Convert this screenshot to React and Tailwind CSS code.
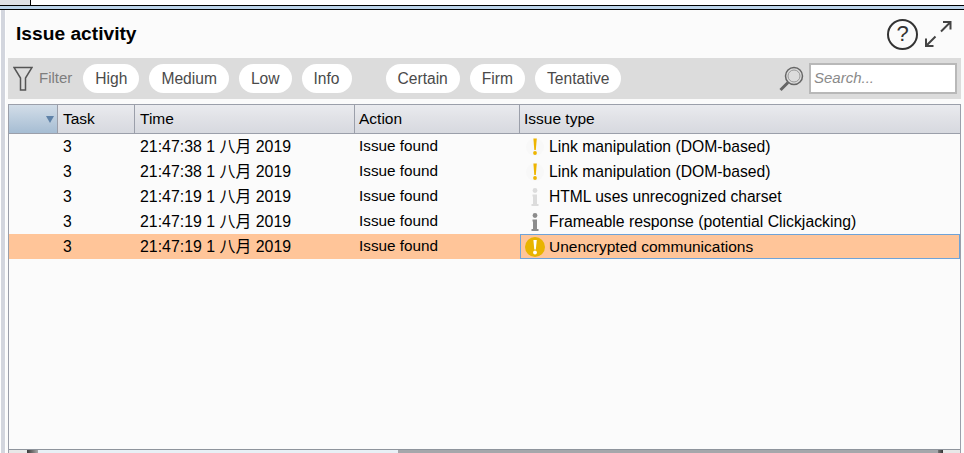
const SEVERITY = ['High', 'Medium', 'Low', 'Info'];
const CONFIDENCE = ['Certain', 'Firm', 'Tentative'];

const ROWS = [
  { time: '21:47:38 1 八月 2019', issue: 'Link manipulation (DOM-based)', icon: 'bang', size: 'text-[15.700px]' },
  { time: '21:47:38 1 八月 2019', issue: 'Link manipulation (DOM-based)', icon: 'bang', size: 'text-[15.700px]' },
  { time: '21:47:19 1 八月 2019', issue: 'HTML uses unrecognized charset', icon: 'infoLight', size: 'text-[15.600px]' },
  { time: '21:47:19 1 八月 2019', issue: 'Frameable response (potential Clickjacking)', icon: 'info', size: 'text-[15.800px]' },
  { time: '21:47:19 1 八月 2019', issue: 'Unencrypted communications', icon: 'circle', size: 'text-[15.500px]', selected: true },
];

function IssueIcon({ type }) {
  if (type === 'bang') {
    return (
      <svg width="20" height="20" viewBox="0 0 20 20">
        <circle cx="10" cy="10" r="9" fill="#f8f8f8" />
        <path d="M8.400 1.500h3.400l-1 11.500h-1.500z" fill="#eeb500" />
        <circle cx="10" cy="16" r="1.900" fill="#eeb500" />
      </svg>
    );
  }
  if (type === 'circle') {
    return (
      <svg width="20" height="20" viewBox="0 0 20 20">
        <circle cx="10" cy="10" r="10" fill="#e8b400" />
        <path d="M8.400 3h3.400l-1 9.500h-1.500z" fill="#fff" />
        <circle cx="10" cy="15.500" r="1.900" fill="#fff" />
      </svg>
    );
  }
  const fill = type === 'info' ? '#8c8c8c' : '#dcdcdc';
  return (
    <svg width="20" height="20" viewBox="0 0 20 20">
      <circle cx="10" cy="3.500" r="2.400" fill={fill} />
      <path d="M7.500 7.500h4.500v9.500h1.500v2h-7v-2h1.500v-7.500h-.5z" fill={fill} />
    </svg>
  );
}

function Pill({ label }) {
  return (
    <span className="flex h-[29px] items-center rounded-full bg-white px-3 text-[15.600px] text-[#4a4a4a]">
      {label}
    </span>
  );
}

function HeadCell({ className, children }) {
  return (
    <div className={`flex h-full items-center border-r border-[#9b9faa] ${className}`}>
      {children}
    </div>
  );
}

export default function App() {
  return (
    <div
      className="flex h-[453px] w-[964px] flex-col overflow-hidden bg-white text-black"
      style={{ fontFamily: '"Liberation Sans", "Noto Sans CJK SC", sans-serif' }}
    >
      {/* window strip on top */}
      <div className="flex h-[5px] shrink-0">
        <div className="w-[30px] bg-[#dfe1e6]" />
        <div className="flex-1 border-l border-black bg-white" />
      </div>
      <div className="h-[5px] shrink-0 border-y border-black bg-[#bcd4ea]" />

      <div className="flex min-h-0 flex-1">
        <div className="ml-[1px] w-[4px] shrink-0 bg-[#d3d6de]" />
        <div className="ml-[1px] flex min-w-0 flex-1 flex-col bg-[#fbfbfb]">
          {/* title */}
          <div className="flex h-[48px] shrink-0 items-center justify-between pl-[10px] pr-[12px]">
            <h1 className="text-[19.200px] font-bold">Issue activity</h1>
            <div className="flex items-center gap-[6px]">
              <span className="flex h-[31px] w-[31px] items-center justify-center rounded-full border-2 border-[#333] text-[22px] leading-none text-[#333]">
                ?
              </span>
              <svg width="28" height="28" viewBox="0 0 28 28" fill="none" stroke="#444" strokeWidth="2">
                <path d="M19 2h7.500v7.500M26.500 2L17 11.500" />
                <path d="M2 18.500V26h7.500M2 26l9.500-9.500" />
              </svg>
            </div>
          </div>

          {/* filter bar */}
          <div className="ml-[2px] mr-[3px] flex h-[41px] shrink-0 items-center bg-[#dcdcdc] pl-[5px]">
            <svg width="20" height="25" viewBox="0 0 20 25" fill="none" stroke="#555" strokeWidth="1.500">
              <path d="M1 1.500h18l-6.500 10.500v12h-5V12z" />
            </svg>
            <span className="ml-[6px] mr-[11px] text-[15px] text-[#7e7e7e]">Filter</span>
            <div className="flex gap-[10px]">
              {SEVERITY.map((s) => <Pill key={s} label={s} />)}
            </div>
            <div className="ml-[34px] flex gap-[10px]">
              {CONFIDENCE.map((s) => <Pill key={s} label={s} />)}
            </div>
            <div className="flex-1" />
            <svg width="26" height="26" viewBox="0 0 26 26" fill="none" stroke="#666" className="mr-[5px]">
              <circle cx="16" cy="10" r="8.500" strokeWidth="1.500" />
              <circle cx="16" cy="10" r="6" strokeWidth="1" stroke="#999" />
              <path d="M10 16.500L2.500 24" strokeWidth="3" />
            </svg>
            <div className="mr-[4px] flex h-[31px] w-[148px] items-center border-2 border-[#b8b8b8] bg-white pl-[3px] text-[15px] italic text-[#8a8a8a]">
              Search...
            </div>
          </div>

          {/* table */}
          <div className="ml-[2px] mr-[3px] mt-[5px] flex min-h-0 flex-1 flex-col border-x border-[#9b9faa]">
            <div className="flex h-[30px] shrink-0 border-y border-[#9b9faa] bg-gradient-to-b from-[#eaebef] via-[#e0e1e6] to-[#d7d9df] text-[15.500px]">
              <div className="flex h-full w-[49px] items-center justify-end border-r border-[#9b9faa] bg-gradient-to-b from-[#d2dde8] to-[#a6bdd3] pr-[3px]">
                <span className="h-0 w-0 border-x-[4px] border-t-[7px] border-x-transparent border-t-[#5f82a8]" />
              </div>
              <HeadCell className="w-[77px] pl-[5px]">Task</HeadCell>
              <HeadCell className="w-[220px] pl-[5px]">Time</HeadCell>
              <HeadCell className="w-[165px] pl-[4px]">Action</HeadCell>
              <div className="flex h-full flex-1 items-center pl-[4px]">Issue type</div>
            </div>

            <div className="min-h-0 flex-1 text-[15.700px]">
              {ROWS.map((row, i) => (
                <div key={i} className={`flex h-[25px] items-center ${row.selected ? 'bg-[#ffc599]' : ''}`}>
                  <div className="w-[49px]" />
                  <div className="w-[77px] pl-[5px]">3</div>
                  <div className="w-[220px] pl-[5px] text-[15.900px]">{row.time}</div>
                  <div className="w-[165px] pl-[4px] text-[15.300px]">Issue found</div>
                  <div className={`flex h-full flex-1 items-center gap-[4px] ${row.size} ${row.selected ? 'border border-[#6fa3d8] pl-[4px]' : 'pl-[5px]'}`}>
                    <IssueIcon type={row.icon} />
                    <span>{row.issue}</span>
                  </div>
                </div>
              ))}
            </div>

            {/* horizontal scrollbar, cut off by the bottom edge */}
            <div className="flex h-[4px] shrink-0 border-t border-[#8e949c]">
              <div className="w-[18px] bg-[#e8e8e8]" />
              <div className="w-[11px] bg-gradient-to-r from-[#3c3c3c] to-[#a9a9a9]" />
              <div className="w-[360px] bg-[#e8f0f6]" />
              <div className="flex-1 bg-[#a5a7ab]" />
              <div className="w-[5px] bg-gradient-to-r from-[#777] to-[#333]" />
              <div className="w-[17px] bg-[#e8e8e8]" />
            </div>
          </div>
        </div>
      </div>
    </div>
  );
}
